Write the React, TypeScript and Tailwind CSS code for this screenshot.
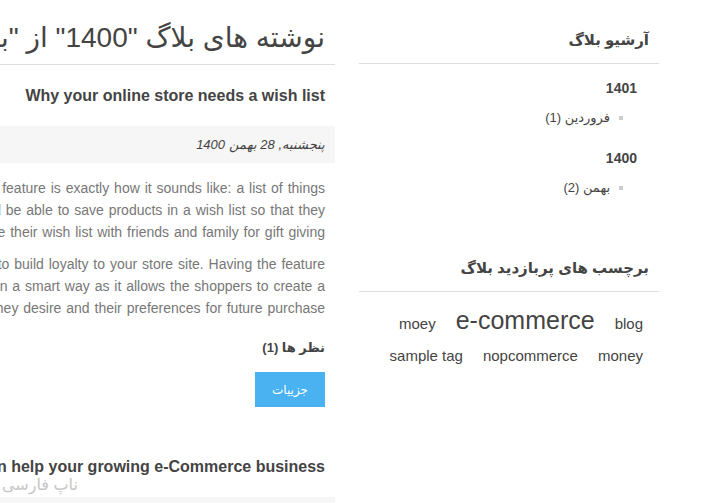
export default function App() {
  const tags = [
    { name: "blog", size: "text-[15px]" },
    { name: "e-commerce", size: "text-[25px]" },
    { name: "moey", size: "text-[15px]" },
    { name: "money", size: "text-[15px]" },
    { name: "nopcommerce", size: "text-[15px]" },
    { name: "sample tag", size: "text-[15px]" },
  ];

  return (
    <div
      dir="rtl"
      className="relative h-[503px] w-full overflow-hidden bg-white font-['Liberation_Sans','DejaVu_Sans',sans-serif] text-[#444]"
    >
      <div className="flex items-start gap-[24px] pr-[54px]">
        {/* sidebar */}
        <aside className="w-[300px] shrink-0">
          <div className="border-b border-[#ddd] pt-[29px] pb-[12px] pr-[10px]">
            <h3 className="text-[15px] font-bold leading-[22px]">آرشیو بلاگ</h3>
          </div>
          <div className="pr-[22px] pt-[14px]">
            <div className="text-[14px] font-bold leading-5">1401</div>
            <div className="mt-[10px] flex items-center gap-[9px] pr-[14px] text-[13px] leading-5">
              <span className="h-[4px] w-[4px] shrink-0 bg-[#ccc]"></span>
              <span>فروردین (1)</span>
            </div>
            <div className="mt-[20px] text-[14px] font-bold leading-5">1400</div>
            <div className="mt-[10px] flex items-center gap-[9px] pr-[14px] text-[13px] leading-5">
              <span className="h-[4px] w-[4px] shrink-0 bg-[#ccc]"></span>
              <span>بهمن (2)</span>
            </div>
          </div>

          <div className="mt-[59px] border-b border-[#ddd] pb-[12px] pr-[10px]">
            <h3 className="text-[15px] font-bold leading-[22px]">برچسب های پربازدید بلاگ</h3>
          </div>
          <div className="mt-[13px] flex flex-wrap items-baseline gap-x-[20px] gap-y-[12px] pr-[16px]">
            {tags.map((t) => (
              <span key={t.name} className={`${t.size} leading-[1.2] text-[#444]`}>
                {t.name}
              </span>
            ))}
          </div>
        </aside>

        {/* main column, cut off at the left edge */}
        <main className="w-[335px] shrink-0 overflow-hidden">
          <div className="border-b border-[#ddd] pt-[22px] pb-[10px] pr-[10px]">
            <h1 className="whitespace-nowrap text-[28px] font-normal leading-[32px]">
              نوشته های بلاگ "1400" از "بهمن"
            </h1>
          </div>

          <div className="mt-[21px] whitespace-nowrap pr-[10px] text-[16px] font-bold leading-5">
            Why your online store needs a wish list
          </div>
          <div className="mt-[20px] flex h-[37px] items-center bg-[#f6f6f6] pr-[10px] text-[13px] italic">
            پنجشنبه, 28 بهمن 1400
          </div>

          <div className="mt-[14px] whitespace-nowrap pr-[10px] text-[14px] leading-[22px] text-[#777] [word-spacing:1px]">
            <div>What is a wish list? This feature is exactly how it sounds like: a list of things</div>
            <div>that shoppers would like to buy later. Customers should be able to save products in a wish list so that they</div>
            <div>can come back and buy them later. They can also share their wish list with friends and family for gift giving</div>
            <div className="mt-[10px]">Wish lists are also a great way to build loyalty to your store site. Having the feature</div>
            <div>on a store site allows online businesses to engage their customers in a smart way as it allows the shoppers to create a</div>
            <div>list of the products they desire and their preferences for future purchase</div>
          </div>

          <div className="mt-[20px] pr-[10px] text-[13px] font-bold leading-[18px]">نظر ها (1)</div>
          <div className="mt-[15px] pr-[10px]">
            <button className="h-[35px] w-[70px] bg-[#4ab2f1] text-[12px] text-white">جزییات</button>
          </div>

          <div className="mt-[50px] whitespace-nowrap pr-[10px] text-[16px] font-bold leading-5">
            How a blog can help your growing e-Commerce business
          </div>
          <div className="mt-[20px] h-[37px] bg-[#f6f6f6]"></div>
        </main>
      </div>

      <div className="absolute bottom-[6px] left-[2px] text-[16px] leading-6 text-[#c6c6c6]">ناپ فارسی</div>
    </div>
  );
}
